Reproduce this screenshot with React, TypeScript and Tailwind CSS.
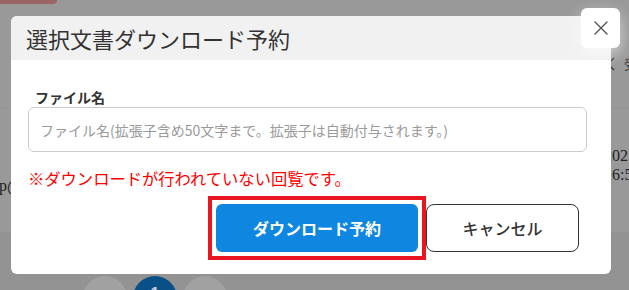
import React from 'react';

const jp = 'font-["Noto_Sans_CJK_JP","Noto_Sans",sans-serif]';

const CloseIcon: React.FC = () => (
  <svg width="14" height="14" viewBox="0 0 14 14" fill="none">
    <path d="M1 1L13 13M13 1L1 13" stroke="#555" strokeWidth="1.4" strokeLinecap="round" />
  </svg>
);

// page behind the overlay (already darkened)
const Backdrop: React.FC = () => (
  <>
    <div className="absolute left-0 top-0 h-[4px] w-[57px] rounded-br-md bg-[#9b6565]" />
    <div className="absolute left-0 right-0 top-[232px] bottom-0 bg-[#939393]" />
    <div className="absolute left-[610px] top-[54px] flex items-center gap-[8px] whitespace-nowrap text-[13px] text-[#3a3a3a]">
      <svg width="6" height="14" viewBox="0 0 6 14" fill="none">
        <path d="M1 4L4 1M1 10L4 13" stroke="#333" strokeWidth="1.2" />
      </svg>
      <span className={jp}>受信</span>
    </div>
    <div className="absolute left-0 right-0 top-[107px] h-px bg-[#949494]" />
    <div className="absolute left-[604px] top-[146px] flex flex-col whitespace-nowrap font-['Liberation_Serif',serif] text-[16px] leading-[19px] text-[#222]">
      <span>2021/06/21</span>
      <span>16:55:02</span>
    </div>
    <div className="absolute left-[-1px] top-[174px] font-['Liberation_Serif',serif] text-[16px] text-[#222]">p@</div>
    <div className="absolute left-[83px] top-[276px] flex gap-[6px]">
      <div className="flex h-[44px] w-[44px] items-start justify-center rounded-full bg-[#a1a1a1] pt-[8px] text-[14px] text-[#666]">‹</div>
      <div className="flex h-[44px] w-[44px] items-start justify-center rounded-full bg-[#0a4f86] pt-[6px] font-['Liberation_Sans',sans-serif] text-[16px] font-bold text-[#ccd]">1</div>
      <div className="flex h-[44px] w-[44px] items-start justify-center rounded-full bg-[#a1a1a1] pt-[8px] text-[14px] text-[#666]">›</div>
    </div>
  </>
);

export default function App() {
  return (
    <div className={`relative h-[290px] w-[629px] overflow-hidden bg-[#999999] ${jp}`}>
      <Backdrop />

      <div className="absolute left-[11px] top-[16px] w-[600px] rounded-[6px] bg-white">
        <div className="flex h-[44px] items-center rounded-t-[6px] bg-[#f1f1f1] pl-[15px]">
          <h2 className="text-[22px] font-normal leading-none text-[#333]">選択文書ダウンロード予約</h2>
        </div>

        <div className="pb-[14px] pl-[17px] pr-[24px] pt-[27px]">
          <label className="block pl-[7px] text-[14px] font-bold leading-[20px] text-[#333]">ファイル名</label>
          <input
            type="text"
            placeholder="ファイル名(拡張子含め50文字まで。拡張子は自動付与されます。)"
            className="block h-[45px] w-full rounded-[6px] border border-[#cccccc] px-[11px] text-[14px] text-[#333] outline-none placeholder:text-[#9a9a9a]"
          />
          <p className="mt-[14px] text-[16.3px] leading-[24px] text-[#ff0000]">※ダウンロードが行われていない回覧です。</p>

          <div className="mt-[6px] flex items-center justify-end pr-[8px]">
            <div className="border-4 border-[#e8161f] bg-white p-[4px]">
              <button className="flex h-[48px] w-[202px] items-center justify-center rounded-[6px] bg-[#0f87e0] text-[16px] font-bold text-white">
                ダウンロード予約
              </button>
            </div>
            <button className="flex h-[48px] w-[153px] items-center justify-center rounded-[8px] border border-[#333] bg-white text-[16px] font-medium text-[#333]">
              キャンセル
            </button>
          </div>
        </div>

        <button className="absolute left-[570px] top-[-8px] flex h-[40px] w-[39px] items-center justify-center rounded-[6px] bg-white shadow-[0_6px_16px_rgba(255,255,255,0.6)]">
          <CloseIcon />
        </button>
      </div>
    </div>
  );
}
